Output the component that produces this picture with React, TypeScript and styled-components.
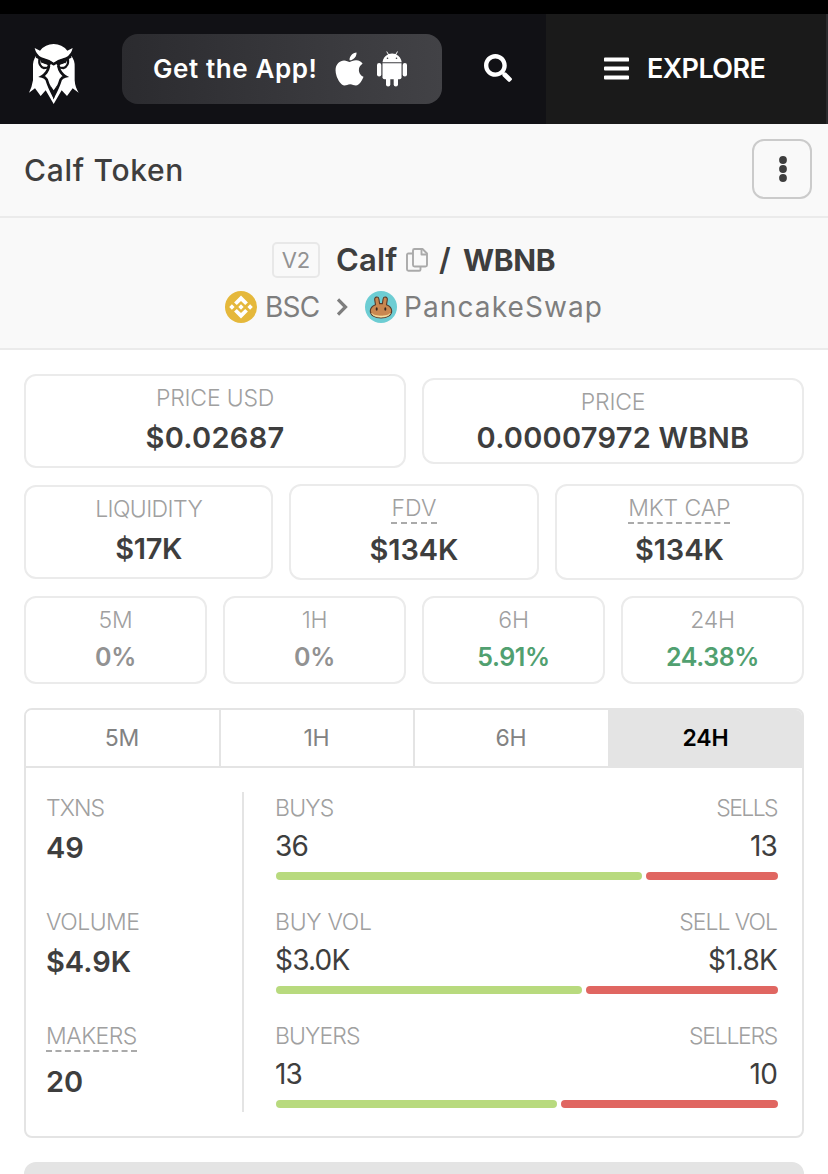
import React from "react";
import styled, { createGlobalStyle } from "styled-components";
import { FaApple, FaBars, FaSearch } from "react-icons/fa";

const GlobalStyle = createGlobalStyle`
  * { box-sizing: border-box; }
  body {
    margin: 0;
    background: #fff;
    color: #3e3e3e;
    font-family: Inter, "Liberation Sans", sans-serif;
  }
  button { font: inherit; color: inherit; cursor: pointer; }
  svg { display: block; flex: none; }
`;

const Page = styled.div`
  width: 828px;
  height: 1174px;
  overflow: hidden;
`;

const StatusStrip = styled.div`
  height: 14px;
  background: #000;
`;

const Header = styled.header`
  display: flex;
  height: 110px;
  background: #111115;
  color: #fff;
`;

const Brand = styled.div`
  display: flex;
  align-items: center;
  width: 122px;
  padding: 9px 0 0 29px;
`;

const AppButton = styled.button`
  display: flex;
  align-items: center;
  align-self: center;
  width: 320px;
  height: 70px;
  padding: 0 0 0 31px;
  border: 0;
  border-radius: 16px;
  background: linear-gradient(90deg, #2b2b2f, #424246);
  color: #fff;
`;

const Text = styled.span<{ $size: number; $weight?: number; $track?: number }>`
  font-size: ${(p) => p.$size}px;
  font-weight: ${(p) => p.$weight ?? 400};
  letter-spacing: ${(p) => p.$track ?? 0}px;
  line-height: 36px;
  white-space: nowrap;
`;

const AppLabel = styled(Text)`
  width: 182px;
  color: #fff;
  text-align: left;
`;

const StoreIcons = styled.div`
  display: flex;
  align-items: center;
  gap: 14px;
`;

const AppleIcon = styled(FaApple)`
  width: 29px;
  height: 38px;
  margin-right: -1px;
`;

const SearchButton = styled.button`
  display: flex;
  align-items: center;
  justify-content: center;
  width: 104px;
  padding: 0 0 2px 8px;
  border: 0;
  background: none;
  color: #fff;
`;

const ExploreButton = styled.button`
  display: flex;
  flex: 1;
  align-items: center;
  gap: 17px;
  padding: 0 0 0 58px;
  border: 0;
  border-right: 2px solid #2a2a2d;
  background: #1a1a1a;
  color: #fff;
`;

const MenuBars = styled(FaBars)`
  width: 25px;
  height: 29px;
  margin: 0 1px 2px 0;
`;

const TitleBar = styled.div`
  display: flex;
  align-items: center;
  justify-content: space-between;
  height: 94px;
  padding: 0 16px 2px 24px;
  background: #f9f9f9;
  border-bottom: 2px solid #ebebeb;
`;

const Title = styled(Text)`
  padding-top: 2px;
`;

const MenuButton = styled.button`
  display: flex;
  align-items: center;
  justify-content: center;
  width: 60px;
  height: 60px;
  padding: 0 0 0 2px;
  border: 2px solid #cbcbcb;
  border-radius: 12px;
  background: none;
`;

const PairSection = styled.section`
  display: flex;
  flex-direction: column;
  align-items: center;
  height: 132px;
  padding-top: 24px;
  background: #f9f9f9;
  border-bottom: 2px solid #ebebeb;
`;

const PairRow = styled.div`
  display: flex;
  align-items: center;
  height: 36px;
`;

const ChainRow = styled(PairRow)`
  margin-top: 11px;
  color: #7e7e7e;
`;

const Version = styled.span`
  width: 48px;
  height: 36px;
  margin-right: 16px;
  border: 2px solid #e8e8e8;
  border-radius: 5px;
  color: #929292;
  font-size: 22px;
  line-height: 33px;
  text-align: center;
`;

const PairName = styled(Text)<{ $width: number }>`
  width: ${(p) => p.$width}px;
`;

const TokenName = styled(PairName)`
  padding-bottom: 1px;
`;

const Spacer = styled.span<{ $width: number }>`
  width: ${(p) => p.$width}px;
`;

const Content = styled.main`
  display: flex;
  flex-direction: column;
  padding: 24px 24px 0;
`;

const StatRow = styled.div<{ $columns: number; $height: number; $gap: number }>`
  display: grid;
  grid-template-columns: repeat(${(p) => p.$columns}, minmax(0, 1fr));
  gap: 16px;
  align-items: center;
  height: ${(p) => p.$height}px;
  margin-bottom: ${(p) => p.$gap}px;
`;

const StatCard = styled.div<{ $height: number; $bottom: number }>`
  display: flex;
  flex-direction: column;
  align-items: center;
  justify-content: space-between;
  height: ${(p) => p.$height}px;
  padding: 8px 0 ${(p) => p.$bottom}px;
  border: 2px solid #ebebeb;
  border-radius: 12px;
`;

const Label = styled.span<{ $track?: number }>`
  color: #a0a0a0;
  font-size: 23px;
  font-weight: 330;
  letter-spacing: ${(p) => p.$track ?? -0.2}px;
  line-height: 28px;
  white-space: nowrap;
`;

const HintLabel = styled(Label)`
  border-bottom: 2px dashed #aaa;
`;

const Value = styled.strong<{ $track?: number; $size?: number; $tone?: string }>`
  color: ${(p) => p.$tone ?? "#3e3e3e"};
  font-size: ${(p) => p.$size ?? 29}px;
  font-weight: 600;
  letter-spacing: ${(p) => p.$track ?? 0}px;
  line-height: 32px;
  white-space: nowrap;
`;

const Panel = styled.section`
  height: 430px;
  border: 2px solid #e4e4e4;
  border-radius: 8px;
  overflow: hidden;
`;

const Tabs = styled.div`
  display: grid;
  grid-template-columns: 195fr 194fr 195fr 192fr;
  height: 58px;
  border-bottom: 2px solid #e4e4e4;
`;

const Tab = styled.button<{ $active?: boolean }>`
  padding: 0 1px 0 0;
  border: 0;
  border-right: ${(p) => (p.$active ? "0" : "2px solid #e4e4e4")};
  background: ${(p) => (p.$active ? "#e4e4e4" : "#fff")};
  color: ${(p) => (p.$active ? "#000" : "#828282")};
  font-size: 23px;
  font-weight: ${(p) => (p.$active ? 600 : 400)};
  letter-spacing: -0.2px;
`;

const PanelBody = styled.div`
  display: flex;
  height: 320px;
  margin: 24px 24px 0 20px;
`;

const Totals = styled.div`
  width: 198px;
  border-right: 2px solid #e4e4e4;
`;

const Total = styled.div<{ $gap?: number }>`
  display: flex;
  flex-direction: column;
  align-items: flex-start;
  gap: ${(p) => p.$gap ?? 10}px;
  height: 114px;
  padding-top: 2px;
`;

const Splits = styled.div`
  flex: 1;
  padding-left: 31px;
`;

const Split = styled.div`
  height: 114px;
  padding-top: 2px;
`;

const SplitLine = styled.div<{ $top?: number }>`
  display: flex;
  justify-content: space-between;
  margin-top: ${(p) => p.$top ?? 0}px;
  padding-right: 1px;
`;

const Count = styled.span`
  font-size: 28px;
  font-weight: 370;
  letter-spacing: -0.8px;
  line-height: 32px;
`;

const Bar = styled.div<{ $buy: number; $sell: number }>`
  display: grid;
  grid-template-columns: ${(p) => p.$buy}fr ${(p) => p.$sell}fr;
  gap: 4px;
  height: 8px;
  margin: 10px 0 0 1px;
`;

const BarPart = styled.span<{ $color: string }>`
  border-radius: 4px;
  background: ${(p) => p.$color};
`;

const NextCard = styled.div`
  height: 60px;
  margin-top: 24px;
  border-radius: 12px;
  background: #e4e4e4;
`;

const EagleLogo = () => (
  <svg width="50" height="60" viewBox="88 131 150 180">
    <g fill="#fff">
      <path d="M121 151Q137 131 162 131Q187 131 203 151L219 143Q215 162 199 171Q177 177 162 187Q147 177 125 171Q109 162 105 143Z" />
      <path d="M109 167Q99 180 100 200V240Q97 260 88 277L106 264L123 287L138 270L162 311L186 270L202 287L219 264L237 277Q226 260 225 240V200Q226 180 215 167L203 177Q180 182 162 194Q144 182 121 177Z" />
    </g>
    <g fill="none" stroke="#111115" strokeWidth="7" strokeLinejoin="round" strokeLinecap="round">
      <path d="M112 170Q124 177 139 181Q152 185 162 192Q172 185 185 181Q200 177 212 170" />
      <path d="M119 179Q117 197 132 203L146 201M205 179Q207 197 192 203L178 201" />
    </g>
    <path
      d="M148 196Q146 208 140 216Q134 224 127 228Q137 230 141 238Q147 258 162 287Q177 258 183 238Q187 230 197 228Q190 224 184 216Q178 208 176 196"
      fill="none"
      stroke="#111115"
      strokeWidth="8"
    />
    <path d="M151 254L162 298L173 254L162 270Z" fill="#111115" />
    <path fill="#111115" d="M139 181L155 188L148 202L142 194L126 189L121 178ZM185 181L169 188L176 202L182 194L198 189L203 178Z" />
    <path fill="#fff" d="M126 187L144 194L141 199Q128 199 126 187ZM198 187L180 194L183 199Q196 199 198 187Z" />
  </svg>
);

const AndroidIcon = () => (
  <svg width="30" height="36" viewBox="0 0 30 36" fill="#fff">
    <path d="M5.500 11.200C5.800 7.600 8.100 4.800 11 3.500L9.300.7l.6-.4 1.800 2.800a11 11 0 0 1 6.800 0L20.300.3l.6.4-1.700 2.800c2.900 1.300 5.200 4.100 5.500 7.700z" />
    <path d="M5.500 12.300h19v14a2 2 0 0 1-2 2h-15a2 2 0 0 1-2-2z" />
    <rect x="0" y="12" width="4.300" height="13.500" rx="2.100" />
    <rect x="25.700" y="12" width="4.300" height="13.500" rx="2.100" />
    <rect x="9" y="25" width="4.300" height="10.500" rx="2.100" />
    <rect x="16.700" y="25" width="4.300" height="10.500" rx="2.100" />
    <circle cx="10.500" cy="7.300" r=".8" fill="#3b3b3f" />
    <circle cx="19.500" cy="7.300" r=".8" fill="#3b3b3f" />
  </svg>
);

const DotsIcon = () => (
  <svg width="8" height="26" viewBox="0 0 8 26" fill="#3e3e3e">
    <circle cx="4" cy="4" r="3.900" />
    <circle cx="4" cy="13" r="3.900" />
    <circle cx="4" cy="22" r="3.900" />
  </svg>
);

const CopyIcon = () => (
  <svg width="22" height="24" viewBox="0 0 22 24" fill="none" stroke="#aaa" strokeWidth="1.900" strokeLinejoin="round">
    <path d="M8.500 1h8l4.500 4.500V17a1.500 1.500 0 0 1-1.500 1.500h-11A1.500 1.500 0 0 1 7 17V2.500A1.500 1.500 0 0 1 8.500 1Z" />
    <path d="M15.500 1v5.500H21M7 5.500H2.300A1.300 1.300 0 0 0 1 6.800v14.500a1.500 1.500 0 0 0 1.500 1.500h10.700a1.300 1.300 0 0 0 1.300-1.300v-3" />
  </svg>
);

const BscIcon = () => (
  <svg width="32" height="32" viewBox="0 0 32 32">
    <circle cx="16" cy="16" r="16" fill="#e5b83b" />
    <g fill="#fff">
      <path d="M16 4.500l6.900 6.900-2.700 2.700L16 9.900l-4.200 4.200-2.700-2.700z" />
      <path d="M16 27.500l6.900-6.900-2.700-2.700L16 22.100l-4.200-4.200-2.700 2.700z" />
      <path d="M16 13.300l2.700 2.700-2.700 2.700-2.700-2.700zM6.900 13.300L9.600 16l-2.700 2.700L4.200 16zM25.100 13.300l2.700 2.700-2.700 2.700-2.700-2.700z" />
    </g>
  </svg>
);

const ChevronIcon = () => (
  <svg width="12" height="18" viewBox="0 0 12 18" fill="none" stroke="#7e7e7e" strokeWidth="3.200">
    <path d="M1 1.500L8.500 9 1 16.500" />
  </svg>
);

const PancakeIcon = () => (
  <svg width="32" height="32" viewBox="0 0 32 32">
    <circle cx="16" cy="16" r="16" fill="#6dcdd3" />
    <path
      d="M10.500 13.700L9.700 8.600c-.4-3 3.700-3.500 4.200-.6l.7 4.600h2.800l.7-4.600c.5-2.900 4.600-2.400 4.200.6l-.8 5.100c3.400 1.400 5.200 3.600 5.200 6.300 0 4.300-4.500 6.900-10.700 6.900S5.300 24.300 5.300 20c0-2.700 1.800-4.900 5.200-6.300z"
      fill="#c98750"
      stroke="#573c2d"
      strokeWidth="1.100"
    />
    <path d="M6.700 22.300c1.500 3 5 3.900 9.300 3.900s7.800-.9 9.300-3.900c-1 1.900-5 2.700-9.300 2.700s-8.300-.8-9.300-2.700z" fill="#f6dfa0" stroke="#f6dfa0" strokeWidth=".6" />
    <ellipse cx="11.700" cy="18" rx="1" ry="1.700" fill="#342720" />
    <ellipse cx="20.300" cy="18" rx="1" ry="1.700" fill="#342720" />
  </svg>
);

const splits = [
  { buy: "BUYS", sell: "SELLS", track: -0.8, sellTrack: -1.6, buyCount: "36", sellCount: "13", buyBar: 366, sellBar: 132 },
  { buy: "BUY VOL", sell: "SELL VOL", track: -0.3, sellTrack: -1, buyCount: "$3.0K", sellCount: "$1.8K", buyBar: 306, sellBar: 192 },
  { buy: "BUYERS", sell: "SELLERS", track: -0.9, sellTrack: -1.3, buyCount: "13", sellCount: "10", buyBar: 281, sellBar: 217 },
];

const changes = [
  { period: "5M", value: "0%", tone: "#929292" },
  { period: "1H", value: "0%", tone: "#929292" },
  { period: "6H", value: "5.91%", tone: "#51a070" },
  { period: "24H", value: "24.38%", tone: "#51a070" },
];

export default function App() {
  return (
    <Page>
      <GlobalStyle />
      <StatusStrip />
      <Header>
        <Brand><EagleLogo /></Brand>
        <AppButton>
          <AppLabel $size={26} $weight={600} $track={0.6}>Get the App!</AppLabel>
          <StoreIcons>
            <AppleIcon />
            <AndroidIcon />
          </StoreIcons>
        </AppButton>
        <SearchButton aria-label="Search"><FaSearch size={28} /></SearchButton>
        <ExploreButton>
          <MenuBars />
          <Text $size={27} $weight={600} $track={-0.6}>EXPLORE</Text>
        </ExploreButton>
      </Header>
      <TitleBar>
        <Title $size={30} $weight={500} $track={0.7}>Calf Token</Title>
        <MenuButton aria-label="More"><DotsIcon /></MenuButton>
      </TitleBar>
      <PairSection>
        <PairRow>
          <Version>V2</Version>
          <TokenName $size={31} $weight={600} $width={70} $track={0.2}>Calf</TokenName>
          <CopyIcon />
          <Spacer $width={11} />
          <PairName $size={31} $weight={600} $width={24}>/</PairName>
          <TokenName $size={30} $weight={700} $width={93} $track={-0.4}>WBNB</TokenName>
        </PairRow>
        <ChainRow>
          <BscIcon />
          <Spacer $width={8} />
          <PairName $size={28} $width={72} $track={-0.8}>BSC</PairName>
          <ChevronIcon />
          <Spacer $width={16} />
          <PancakeIcon />
          <Spacer $width={7} />
          <PairName $size={28} $width={199} $track={1.1}>PancakeSwap</PairName>
        </ChainRow>
      </PairSection>
      <Content>
        <StatRow $columns={2} $height={94} $gap={16}>
          <StatCard $height={94} $bottom={12}>
            <Label>PRICE USD</Label>
            <Value $track={0.3}>$0.02687</Value>
          </StatCard>
          <StatCard $height={86} $bottom={8}>
            <Label>PRICE</Label>
            <Value $track={0.25}>0.00007972 WBNB</Value>
          </StatCard>
        </StatRow>
        <StatRow $columns={3} $height={96} $gap={16}>
          <StatCard $height={94} $bottom={12}>
            <Label $track={-0.6}>LIQUIDITY</Label>
            <Value $track={-0.3}>$17K</Value>
          </StatCard>
          <StatCard $height={96} $bottom={12}>
            <HintLabel $track={0.1}>FDV</HintLabel>
            <Value $track={-0.1}>$134K</Value>
          </StatCard>
          <StatCard $height={96} $bottom={12}>
            <HintLabel $track={-0.1}>MKT CAP</HintLabel>
            <Value $track={-0.1}>$134K</Value>
          </StatCard>
        </StatRow>
        <StatRow $columns={4} $height={88} $gap={24}>
          {changes.map((c) => (
            <StatCard key={c.period} $height={88} $bottom={9}>
              <Label>{c.period}</Label>
              <Value $size={25} $track={-0.4} $tone={c.tone}>{c.value}</Value>
            </StatCard>
          ))}
        </StatRow>
        <Panel>
          <Tabs>
            <Tab>5M</Tab>
            <Tab>1H</Tab>
            <Tab>6H</Tab>
            <Tab $active>24H</Tab>
          </Tabs>
          <PanelBody>
            <Totals>
              <Total><Label $track={-0.9}>TXNS</Label><Value>49</Value></Total>
              <Total><Label $track={-0.5}>VOLUME</Label><Value>$4.9K</Value></Total>
              <Total $gap={14}><HintLabel $track={-0.5}>MAKERS</HintLabel><Value>20</Value></Total>
            </Totals>
            <Splits>
              {splits.map((s) => (
                <Split key={s.buy}>
                  <SplitLine>
                    <Label $track={s.track}>{s.buy}</Label>
                    <Label $track={s.sellTrack}>{s.sell}</Label>
                  </SplitLine>
                  <SplitLine $top={8}><Count>{s.buyCount}</Count><Count>{s.sellCount}</Count></SplitLine>
                  <Bar $buy={s.buyBar} $sell={s.sellBar}>
                    <BarPart $color="#b8da7e" />
                    <BarPart $color="#e06661" />
                  </Bar>
                </Split>
              ))}
            </Splits>
          </PanelBody>
        </Panel>
        <NextCard />
      </Content>
    </Page>
  );
}
